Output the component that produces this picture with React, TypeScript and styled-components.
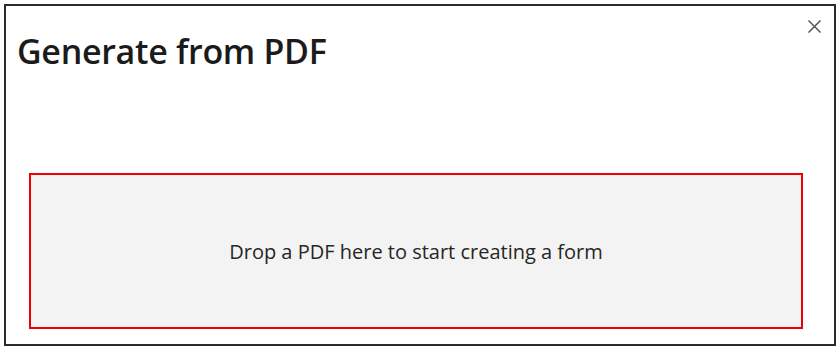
import styled, { createGlobalStyle } from "styled-components";

const GlobalStyle = createGlobalStyle`
  html, body {
    margin: 0;
    padding: 0;
    background: #ffffff;
  }
  body {
    font-family: "Open Sans", "Noto Sans", sans-serif;
  }
`;

const App: React.FC = () => {
  return (
    <>
      <GlobalStyle />
      <Dialog>
        <HeaderRow>
          <Title>Generate from PDF</Title>
          <CloseButton aria-label="Close">
            <svg width="13" height="13" viewBox="0 0 13 13">
              <path
                d="M1 1 L12 12 M12 1 L1 12"
                stroke="#555"
                strokeWidth="1.5"
                strokeLinecap="square"
              />
            </svg>
          </CloseButton>
        </HeaderRow>
        <DropZone>
          <DropText>Drop a PDF here to start creating a form</DropText>
        </DropZone>
      </Dialog>
    </>
  );
};

export default App;

const Dialog = styled.div`
  box-sizing: border-box;
  margin: 4px 0 0 4px;
  width: 832px;
  height: 342px;
  border: 2px solid #2b2b2b;
  background: #ffffff;
  display: flex;
  flex-direction: column;
  padding: 0 31px 0 23px;
`;
const HeaderRow = styled.div`
  display: flex;
  justify-content: space-between;
  align-items: flex-start;
  height: 167px;
  margin-right: -18px;
  margin-left: -12px;
`;
const Title = styled.h1`
  margin: 25px 0 0 0;
  font-family: "Open Sans", "Noto Sans", sans-serif;
  font-weight: 600;
  font-size: 34px;
  line-height: 40px;
  color: #1b1b1b;
  letter-spacing: -0.3px;
`;
const CloseButton = styled.div`
  margin-top: 14px;
  width: 13px;
  height: 13px;
  display: flex;
`;
const DropZone = styled.div`
  box-sizing: border-box;
  height: 156px;
  border: 2px solid #ee0000;
  background: #f3f3f3;
  display: flex;
  align-items: center;
  justify-content: center;
`;
const DropText = styled.span`
  font-family: "Open Sans", "Noto Sans", sans-serif;
  font-size: 20px;
  color: #262626;
  letter-spacing: 0;
`;
